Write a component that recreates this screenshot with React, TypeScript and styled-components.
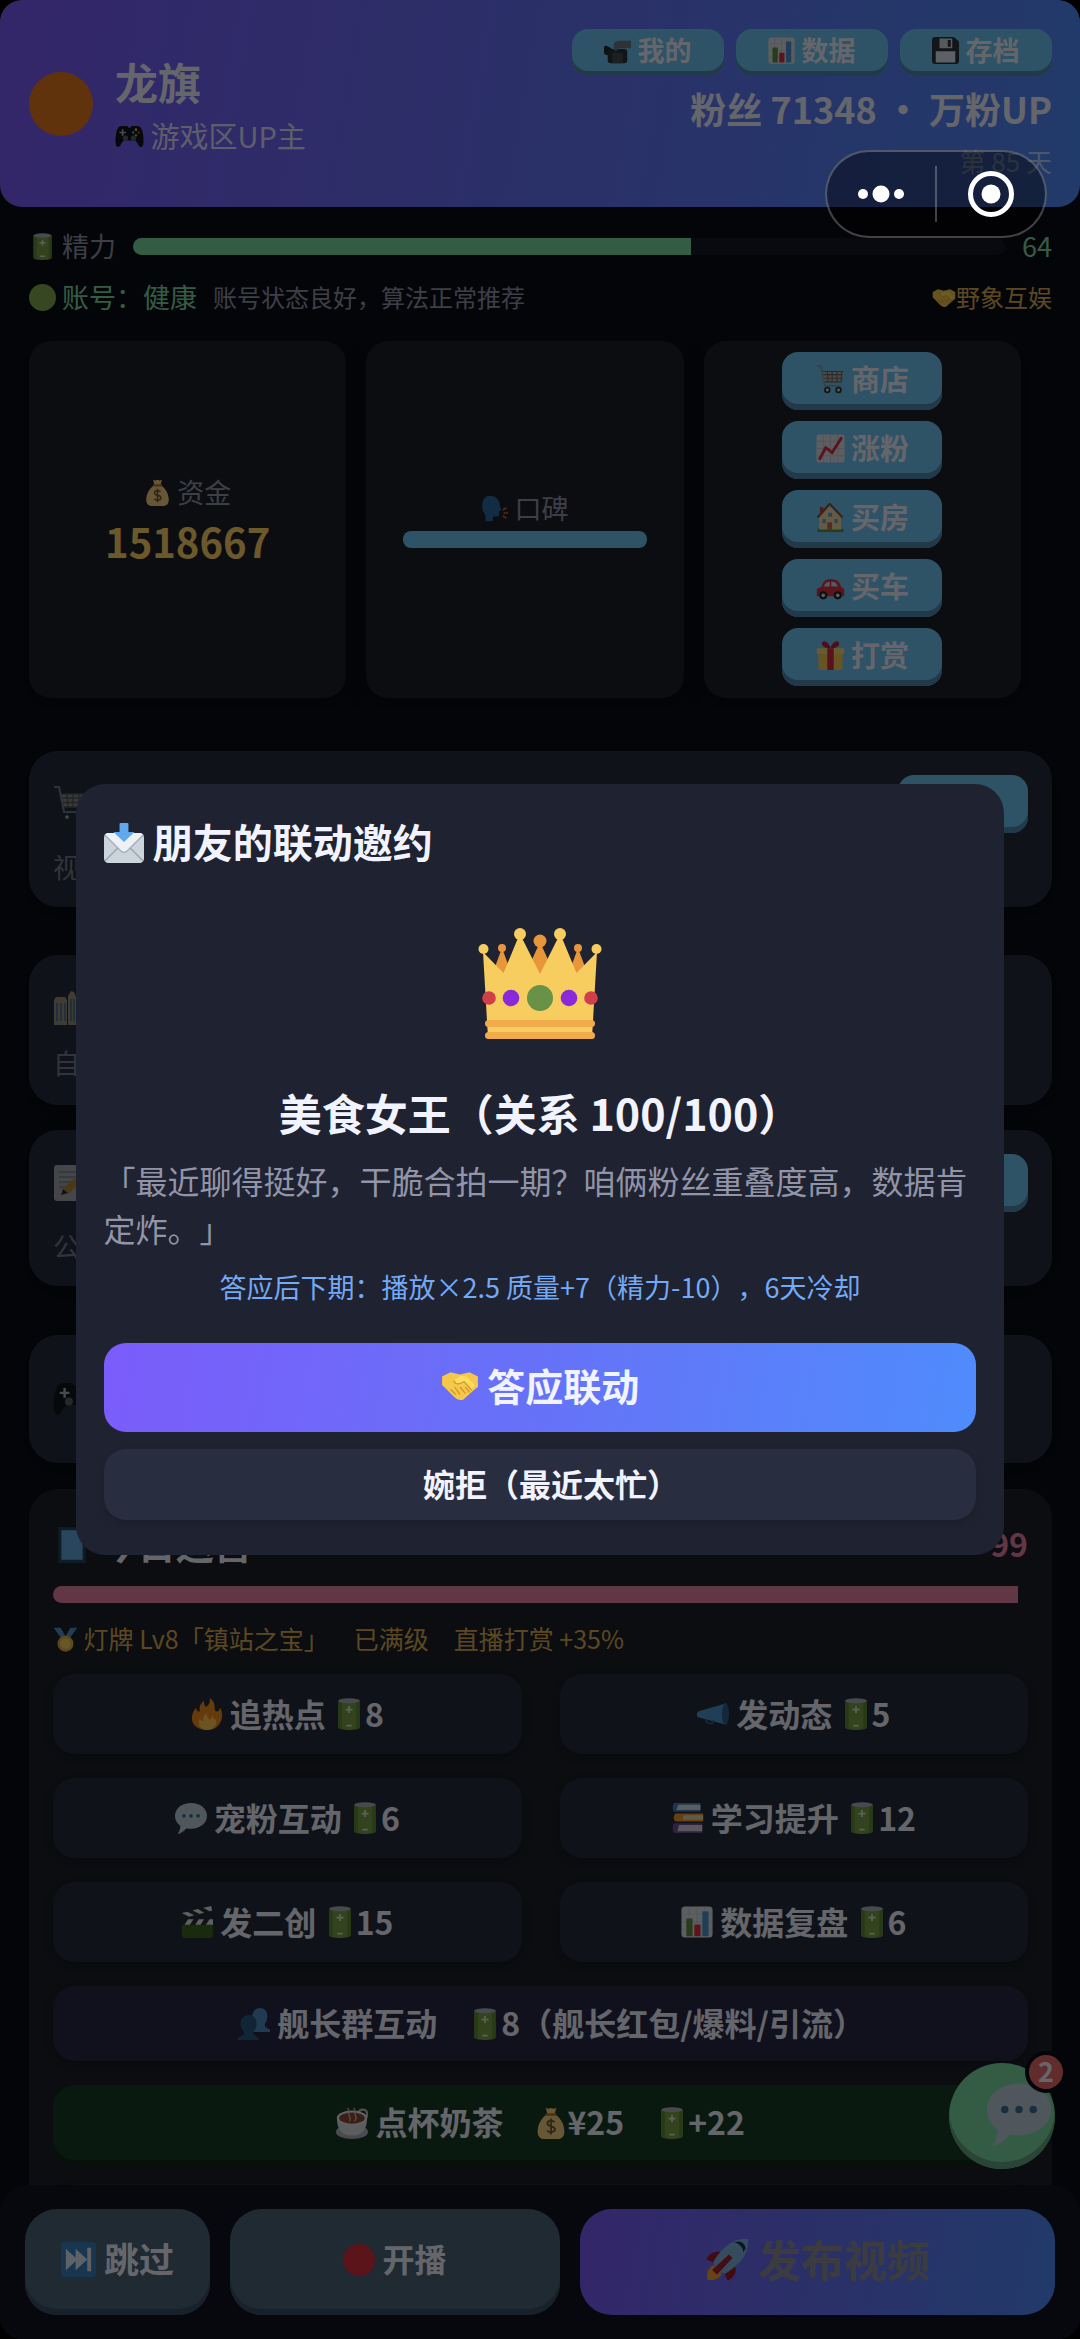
import React from "react";
import styled, { createGlobalStyle, css } from "styled-components";

const c = {
  page: "#0b0d17",
  panel: "#1f2230",
  card: "#1c1f29",
  tile: "#262d3c",
  raised: "#292d40",
  muted: "#9294a8",
  text: "#f1f3ff",
  blue: "#6fc3f3",
  blueEdge: "#4f89ad",
  green: "#7cdba4",
  gold: "#ffd166",
  pink: "#e783a4",
  grad: "linear-gradient(100deg, #7b5cfa, #6672f8 50%, #4f8cfc)",
};

const Global = createGlobalStyle`
  *, *::before, *::after { box-sizing: border-box; }
  body {
    margin: 0;
    background: #000;
    color: ${c.text};
    font-family: "Noto Sans CJK SC", "Noto Sans", sans-serif;
    text-spacing-trim: space-all;
  }
  button { font-family: inherit; border: 0; margin: 0; padding: 0; cursor: pointer; color: ${c.text}; text-spacing-trim: space-all; }
  h1, h2, h3, p { margin: 0; }
`;

/* ---------- icons ---------- */

const art: Record<string, React.ReactNode> = {
  orangeDot: <circle cx="18" cy="18" r="18" fill="#e6791e" />,
  greenDot: <circle cx="18" cy="18" r="18" fill="#83a94f" />,
  redDot: <circle cx="18" cy="18" r="18" fill="#d8303c" />,
  gamepad: (
    <>
      <path d="M9 5h6l2 2h2l2-2h6c5 0 7 4 8 12 .8 6 1 14-3 14-3 0-4-6-7-8H11c-3 2-4 8-7 8-4 0-3.800-8-3-14C2 9 4 5 9 5z" fill="#121518" />
      <path d="M8.500 9h2v3h3v2h-3v3h-2v-3h-3v-2h3z" fill="#aab4bd" />
      <circle cx="26" cy="9.500" r="1.600" fill="#f4c430" />
      <circle cx="29.500" cy="13" r="1.600" fill="#d8303c" />
      <circle cx="22.500" cy="13" r="1.600" fill="#4f8cfc" />
      <circle cx="26" cy="16.500" r="1.600" fill="#7ab648" />
      <circle cx="13" cy="20" r="3.300" fill="#59636c" />
      <circle cx="23" cy="20" r="3.300" fill="#59636c" />
    </>
  ),
  camera: (
    <>
      <path d="M0 14c0-2 2-3 4-2l6 3v11l-6-2c-3 0-4-2-4-4z" fill="#22292f" />
      <rect x="5" y="16" width="26" height="19" rx="4" fill="#2c343b" />
      <rect x="11" y="21" width="14" height="14" fill="#424c55" />
      <path d="M13 11c0-4 3-6 8-6h15v10H20l-2 3h-5z" fill="#6d7780" />
    </>
  ),
  bars: (
    <>
      <rect x="0.500" y="0.500" width="35" height="35" rx="4" fill="#dbe1e8" />
      <path d="M1 9h34M1 18h34M1 27h34M9 1v34M18 1v34M27 1v34" stroke="#c3cbd4" strokeWidth="1" />
      <rect x="6" y="14" width="7" height="20" fill="#5d9040" />
      <rect x="15" y="21" width="7" height="13" fill="#dd2e44" />
      <rect x="24" y="6" width="7" height="28" fill="#4d93d0" />
    </>
  ),
  floppy: (
    <>
      <path d="M4 0h25l7 6v26a4 4 0 0 1-4 4H4a4 4 0 0 1-4-4V4a4 4 0 0 1 4-4z" fill="#2b353e" />
      <path d="M10 2h17v13H10z" fill="#ccd6dd" />
      <path d="M21 4h4v9h-4z" fill="#2b353e" />
      <path d="M5 19h26v15H5z" fill="#e1e8ed" />
    </>
  ),
  battery: (
    <>
      <path d="M6 3h24v30c0 4-24 4-24 0z" fill="#78a145" />
      <path d="M6 3h4v32c-2-.500-4-1-4-2zM26 3h4v30c0 1-2 1.500-4 2z" fill="#628a38" />
      <ellipse cx="18" cy="3.200" rx="12" ry="2.800" fill="#a9b3bb" />
      <path d="M17 9h2v3h3v2h-3v3h-2v-3h-3v-2h3zM15 30h6v2h-6z" fill="#dbe6d0" />
    </>
  ),
  handshake: (
    <>
      <path d="M1 9l8-4 9 2 9-2 8 4v10l-4 3-10 9c-3 1-6 0-9-3l-8-8-3-3z" fill="#f5c74b" />
      <path d="M13 12l6-4 5 1 8 8-3 4-7-6-4 2c-3 1-5-1-5-4z" fill="#ffdc5d" />
      <path d="M12 13c2 4 5 4 10 1l7 8M9 21l5 5M13 19l5 7M18 19l5 6M23 19l4 5" stroke="#cf9a2e" strokeWidth="1.300" fill="none" />
    </>
  ),
  money: (
    <>
      <path d="M12 1l3 1 3-1 3 1 3-1-2 7c8 5 11 13 11 20 0 5-3 8-8 8H11c-5 0-8-3-8-8C3 21 6 13 14 8z" fill="#f3cf83" />
      <path d="M12 7h12v3H12z" fill="#bf7434" />
      <path d="M22 17c-2-2-8-2-8 1.500 0 4 8.500 2.500 8.500 6.500s-7 4-9 1.500M18 13v18" stroke="#6c5a36" strokeWidth="2" fill="none" />
    </>
  ),
  speak: (
    <>
      <path d="M12 1c8 0 13 6 13 13l2 6-3 2v6l-8 1v6H6v-8C-2 18 1 1 12 1z" fill="#2a6aa0" />
      <path d="M29 20l5-3M30 24h6M29 28l5 3" stroke="#dd5b2e" strokeWidth="2" />
    </>
  ),
  cart: (
    <>
      <path d="M1 1h5l5 25h20" fill="none" stroke="#8d99a3" strokeWidth="2.200" />
      <path d="M8 8h26l-2 13H11z" fill="#bdb39a" />
      <path d="M8 8h26M9 12h24M10 16.500h23M11 21h21M14 8l1 13M20 8v13M26 8v13M32 8l-1 13" stroke="#5e6a74" strokeWidth="1.400" />
      <circle cx="14" cy="31" r="4" fill="#2c3338" /><circle cx="28" cy="31" r="4" fill="#2c3338" />
      <circle cx="14" cy="31" r="1.800" fill="#dde3e8" /><circle cx="28" cy="31" r="1.800" fill="#dde3e8" />
    </>
  ),
  trend: (
    <>
      <rect x="0.500" y="0.500" width="35" height="35" rx="4" fill="#dbe1e8" />
      <path d="M1 9h34M1 18h34M1 27h34M9 1v34M18 1v34M27 1v34" stroke="#bcc6cf" strokeWidth="1" />
      <path d="M4 32l8-15 8 6L32 4" fill="none" stroke="#dd2e44" strokeWidth="3.600" />
    </>
  ),
  house: (
    <>
      <path d="M2 32h32v4H2z" fill="#5c913b" />
      <path d="M4 17L17 4l14 13v16H4z" fill="#f0d9a4" />
      <path d="M2 18L17 1l16 17" fill="none" stroke="#7c553c" strokeWidth="2.600" />
      <path d="M5 5h4v7l-4 4z" fill="#b8453b" />
      <path d="M14 24h6v9h-6z" fill="#c1694f" />
      <path d="M8 20h4v5H8zM23 20h4v5h-4zM15 12h5v5h-5z" fill="#55a6d8" />
    </>
  ),
  car: (
    <>
      <path d="M1 30V21l6-3c2-7 5-9 12-9s10 3 12 9l4 3v9z" fill="#dd2e44" />
      <path d="M10 18c1-4 3-6 7-6v6zM19 12c5 0 7 2 8 6h-8z" fill="#bfdcec" />
      <circle cx="9" cy="29" r="5" fill="#232a30" /><circle cx="27" cy="29" r="5" fill="#232a30" />
      <circle cx="9" cy="29" r="2.200" fill="#dde3e8" /><circle cx="27" cy="29" r="2.200" fill="#dde3e8" />
    </>
  ),
  gift: (
    <>
      <path d="M3 14h30v19a3 3 0 0 1-3 3H6a3 3 0 0 1-3-3z" fill="#f3c858" />
      <path d="M1 9h34v7H1z" fill="#fbd973" />
      <path d="M14 9h8v27h-8z" fill="#d32b40" />
      <path d="M18 9C12 9 5 6 8 1c4-3 9 3 10 8 1-5 6-11 10-8 3 5-4 8-10 8z" fill="#b5233a" />
    </>
  ),
  city: (
    <>
      <path d="M1 10l2-3h9l2 3v25H1zM15 6l3-5 3 1 2 5v28h-8zM23 12h12v23H23z" fill="#c6b59a" />
      <path d="M4 13v18M8 13v18M12 13v18M18 9v22M21 9v22M27 16v15M31 16v15" stroke="#5a8fb5" strokeWidth="1.800" />
    </>
  ),
  memo: (
    <>
      <rect x="1" y="0" width="30" height="36" rx="3" fill="#d9dde0" />
      <path d="M6 7h19M6 12h19M6 17h14M6 22h8" stroke="#98a4ad" strokeWidth="1.600" />
      <path d="M31 6l5 5-20 17-7 2 1-7z" fill="#f0ae35" />
      <path d="M10 24l5 4-7 2z" fill="#38332e" />
    </>
  ),
  notebook: (
    <>
      <rect x="5" y="1" width="26" height="34" fill="#1f4655" />
      <rect x="8" y="4" width="20" height="28" fill="#64a7e3" />
    </>
  ),
  medal: (
    <>
      <path d="M1 1h10l8 14h-8zM35 1H25l-8 14h8z" fill="#4f8fcb" />
      <circle cx="18" cy="24" r="11.500" fill="#dfae43" />
      <circle cx="18" cy="24" r="7.500" fill="#f8cf67" />
    </>
  ),
  fire: (
    <>
      <path d="M35 19c0-3-1-6-2-8-1 3-3 5-5 4-3-3 1-10-7-15 1 5-1 8-4 10-2-2-3-4-2-7-5 3-6 8-5 12-2 1-4-1-4-4-4 4-5 9-5 12 0 8 8 13 17 13s17-6 17-17z" fill="#f08c1d" />
      <path d="M28 24c-2 1-3-1-3-4-2 1-3 3-3 5-3-1-4-4-4-8-5 3-4 7-4 9-2 0-3-1-4-3-3 6 0 13 8 13s12-6 10-12z" fill="#ffc94f" />
    </>
  ),
  horn: (
    <>
      <path d="M2 15L33 6v24L2 22c-3-1-3-6 0-7z" fill="#4f93cf" />
      <ellipse cx="32" cy="18" rx="4" ry="12" fill="#2c618f" />
      <path d="M10 24c0 6 9 6 9 1" fill="none" stroke="#2c618f" strokeWidth="2" />
    </>
  ),
  bubble: (
    <>
      <path d="M18 1c10 0 18 6 18 14.500S28 30 18 30c-2 0-4 0-5-.500C10 33 7 35 3 36c2-3 3-6 3-9-4-3-6-7-6-11.500C0 7 8 1 18 1z" fill="#bcd0dd" />
      <circle cx="10" cy="15.500" r="2.100" fill="#3c6e94" /><circle cx="18" cy="15.500" r="2.100" fill="#3c6e94" /><circle cx="26" cy="15.500" r="2.100" fill="#3c6e94" />
    </>
  ),
  books: (
    <>
      <path d="M3 1h29v10H3c-3 0-3-10 0-10z" fill="#3e84bd" /><path d="M7 3h25v6H5z" fill="#d7e0e7" />
      <path d="M5 13h30v9H5c-4 0-4-9 0-9z" fill="#f0992c" /><path d="M13 15h22v5H12z" fill="#e9d6ae" />
      <path d="M3 24h31v11H3c-3 0-3-11 0-11z" fill="#74509c" /><path d="M8 26h26v7H6z" fill="#d8d0de" />
    </>
  ),
  clap: (
    <>
      <path d="M1 21h35v12a3 3 0 0 1-3 3H4a3 3 0 0 1-3-3z" fill="#3f6420" />
      <path d="M1 15h35v6H1zM1 8l33-8 1 6-33 8z" fill="#2a3030" />
      <path d="M4 21l4-6h6l-4 6zM16 21l4-6h6l-4 6zM28 21l4-6h4v6zM1 8l8 4 6-1.500-8-4zM13 5l8 4 5-1.500-7-4zM25 2l7 4 3-1-1-5z" fill="#dfe3e6" />
    </>
  ),
  people: (
    <>
      <path d="M25 0c5 0 8 4 8 9 0 4-1 7-3 9 0 4 3 5 6 6v3H16V14C15 6 18 0 25 0z" fill="#4d8bc2" />
      <path d="M12 8c6 0 9 4 9 10 0 4-2 7-4 9 0 4 3 5 6 6v3H0v-3c3-1 7-2 7-6-2-2-4-5-4-9C3 12 6 8 12 8z" fill="#275b80" />
    </>
  ),
  coffee: (
    <>
      <path d="M25 7c2-6 10-5 10 1s-6 10-9 8" fill="none" stroke="#b9bfc4" strokeWidth="2.500" />
      <ellipse cx="18" cy="28" rx="18" ry="8" fill="#aeb4ba" />
      <path d="M1 12h34c0 11-4 20-17 20S1 23 1 12z" fill="#d9dde1" />
      <ellipse cx="18" cy="12" rx="17" ry="8" fill="#e8ecef" />
      <ellipse cx="18" cy="12.500" rx="14.500" ry="6.300" fill="#8a4b38" />
      <path d="M13 1c3 4 0 5 2 9s0 5 1 6M20 1c3 4 0 5 2 9s-1 5-1 6" fill="none" stroke="#d9b6a9" strokeWidth="1.500" />
    </>
  ),
  next: (
    <>
      <rect width="36" height="36" rx="4" fill="#3b80bd" />
      <path d="M5 7l12 11L5 29zM15 7l12 11-12 11zM27 6h4v24h-4z" fill="#e3e9ee" />
    </>
  ),
  rocket: (
    <>
      <path d="M1 17c3-6 8-7 13-6l-6 9zM19 35c6-3 8-8 6-13l-9 6z" fill="#9d1b2b" />
      <path d="M2 34c-1-6 1-10 5-12l7 7c-2 4-6 6-12 5z" fill="#f6a32f" />
      <path d="M36 0c1 12-5 20-19 29l-4-1-5-5-1-4C15 6 24-1 36 0z" fill="#7cb5df" />
      <path d="M24 3c4 0 8 4 8 8l2-3c0-3-3-6-6-6z" fill="#21313e" />
      <path d="M20 13l3 3-13 14-4-4z" fill="#a61f30" />
    </>
  ),
  invite: (
    <>
      <rect x="0" y="9" width="36" height="27" rx="4" fill="#ccd4dc" />
      <path d="M1 34l13-13M35 34L22 21" stroke="#9aa6b2" strokeWidth="1.300" />
      <path d="M1 11c0-1 1-2 3-2h28c2 0 3 1 3 2L21 25c-2 2-4 2-6 0z" fill="#eef1f5" />
      <path d="M1 11l14 14c2 2 4 2 6 0l14-14" fill="none" stroke="#a6b1bc" strokeWidth="1.300" />
      <path d="M15 0h6a1 1 0 0 1 1 1v7h5.500L18 17 8.500 8H14V1a1 1 0 0 1 1-1z" fill="#5fa9ef" />
    </>
  ),
};

const Glyph = styled.svg<{ $size?: number; $dim?: boolean }>`
  width: ${(p) => (p.$size ? `${p.$size}px` : "1em")};
  height: ${(p) => (p.$size ? `${p.$size}px` : "1em")};
  vertical-align: -0.12em;
  flex: none;
  opacity: ${(p) => (p.$dim ? 0.7 : 1)};
`;

const Icon = ({ name, size, dim }: { name: string; size?: number; dim?: boolean }) => (
  <Glyph viewBox="0 0 36 36" $size={size} $dim={dim} aria-hidden="true">{art[name]}</Glyph>
);

const CrownSvg = styled.svg`
  display: block;
  width: 124px;
  height: 112px;
  margin: 57px auto 42px;
`;

const Crown = () => (
  <CrownSvg viewBox="0 0 124 112" aria-hidden="true">
    <g fill="#e8963a">
      <circle cx="24" cy="20" r="4" /><circle cx="100" cy="20" r="4" /><circle cx="62" cy="13" r="6.500" />
      <path d="M24 20l14 38H10zM100 20l14 38H86zM62 14l20 44H42z" />
    </g>
    <g fill="#f7cd5f">
      <circle cx="5.500" cy="21" r="5" /><circle cx="118.500" cy="21" r="5" />
      <circle cx="42" cy="6" r="6" /><circle cx="82" cy="6" r="6" />
      <path d="M5 24l20.500 21L40 10h4l18 36L80 10h4l14.500 35L119 24l-5 86H10z" />
    </g>
    <g fill="#f2ab4a">
      <rect x="7" y="92" width="110" height="7" rx="3.500" /><rect x="7" y="104" width="110" height="7" rx="3.500" />
    </g>
    <circle cx="11" cy="70" r="6.800" fill="#cf3f49" /><circle cx="113" cy="70" r="6.800" fill="#cf3f49" />
    <circle cx="33" cy="70" r="8.300" fill="#8b29da" /><circle cx="91" cy="70" r="8.300" fill="#8b29da" />
    <circle cx="62" cy="70" r="13" fill="#679248" />
  </CrownSvg>
);

/* ---------- page ---------- */

const Shell = styled.div`
  position: relative;
  display: flex;
  flex-direction: column;
  height: 100vh;
  overflow: hidden;
  border-radius: 22px;
  background: ${c.page};
`;

const Scroll = styled.main`
  flex: 1;
  min-height: 0;
  overflow: hidden;
`;

const Header = styled.header`
  display: flex;
  justify-content: space-between;
  align-items: center;
  padding: 29px 28px 28px 29px;
  border-radius: 22px;
  background: ${c.grad};
`;

const Profile = styled.div`
  display: flex;
  align-items: center;
  gap: 22px;
`;

const Name = styled.h1`
  font-size: 43px;
  line-height: 56px;
`;

const Role = styled.p`
  margin-top: 6px;
  font-size: 29px;
  line-height: 40px;
  color: rgba(255, 255, 255, 0.8);
`;

const HeaderSide = styled.div`
  text-align: right;
`;

const HeaderButtons = styled.div`
  display: flex;
  justify-content: flex-end;
  gap: 12px;
`;

const Fans = styled.p`
  margin-top: 10px;
  font-size: 36px;
  font-weight: 700;
  line-height: 44px;
`;

const Day = styled.p`
  margin-top: 13px;
  font-size: 26px;
  line-height: 36px;
  color: rgba(255, 255, 255, 0.6);
`;

const BlueButton = styled.button<{ $kind: "small" | "shop" | "card" }>`
  border-radius: 16px;
  background: ${c.blue};
  font-weight: 700;
  ${(p) =>
    p.$kind === "small"
      ? css`width: 152px; height: 47px; padding-bottom: 6px; font-size: 27px; line-height: 40px; box-shadow: inset 0 -5px 0 ${c.blueEdge};`
      : css`width: ${p.$kind === "shop" ? 160 : 130}px; height: 58px; padding-bottom: 7px; font-size: 29px; line-height: 44px; box-shadow: inset 0 -6px 0 ${c.blueEdge};`}
`;

const Body = styled.div`
  padding: 21px 28px 0 29px;
`;

const EnergyRow = styled.div`
  display: flex;
  align-items: center;
  gap: 17px;
  font-size: 27px;
  line-height: 36px;
  color: ${c.muted};
`;

const Track = styled.div`
  flex: 1;
  height: 17px;
  border-radius: 9px;
  overflow: hidden;
  background: #161a24;
`;

const Fill = styled.div<{ $tone: string }>`
  height: 100%;
  background: ${(p) => p.$tone};
`;

const Tint = styled.span<{ $tone: string }>`
  color: ${(p) => p.$tone};
`;

const AccountRow = styled.div`
  display: flex;
  align-items: center;
  gap: 16px;
  margin-top: 15px;
  font-size: 27px;
  line-height: 36px;
`;

const Small = styled.span<{ $tone: string; $end?: boolean }>`
  font-size: 24px;
  color: ${(p) => p.$tone};
  margin-left: ${(p) => (p.$end ? "auto" : "0")};
`;

const Stats = styled.section`
  display: grid;
  grid-template-columns: repeat(3, 1fr);
  gap: 20px;
  margin: 26px 31px 0 0;
`;

const Stat = styled.div`
  display: flex;
  flex-direction: column;
  align-items: center;
  justify-content: center;
  gap: 11px;
  padding: 11px 37px 12px;
  border-radius: 22px;
  background: ${c.card};
  box-shadow: 0 6px 20px rgba(0, 0, 0, 0.3);
`;

const StatLabel = styled.p`
  font-size: 27px;
  line-height: 36px;
  color: ${c.muted};
`;

const Money = styled.p`
  margin-top: -3px;
  font-size: 40px;
  font-weight: 700;
  line-height: 46px;
  color: ${c.gold};
`;

const RepTrack = styled.div`
  width: 100%;
  height: 17px;
  margin-top: -6px;
  border-radius: 8px;
  background: ${c.blue};
`;

const Promo = styled.section<{ $gap?: number; $pad: number; $above: number }>`
  margin-top: ${(p) => p.$above}px;
  padding: 24px 24px ${(p) => p.$pad}px;
  border-radius: 29px;
  background: ${c.tile};
  box-shadow: 0 6px 20px rgba(0, 0, 0, 0.3);
  p { margin-top: ${(p) => p.$gap}px; }
`;

const PromoHead = styled.div<{ $tall?: boolean }>`
  display: flex;
  align-items: center;
  justify-content: space-between;
  min-height: ${(p) => (p.$tall ? 80 : 58)}px;
`;

const PromoText = styled.p`
  font-size: 27px;
  line-height: 40px;
  color: #777b8c;
`;

const Ops = styled.section`
  margin-top: 26px;
  padding: 26px 24px;
  border-radius: 29px;
  background: ${c.card};
`;

const OpsHead = styled.div`
  display: flex;
  justify-content: space-between;
  align-items: center;
  line-height: 56px;
`;

const OpsTitle = styled.h2`
  font-size: 38px;
`;

const Heat = styled.strong`
  font-size: 32px;
  color: ${c.pink};
`;

const HeatTrack = styled(Track)`
  margin-top: 15px;
  background: transparent;
`;

const Badge = styled.p`
  margin: 17px 0 18px;
  font-size: 25px;
  line-height: 36px;
  color: #d9ad55;
`;

const Actions = styled.div`
  display: grid;
  grid-template-columns: 1fr 1fr;
  gap: 24px 38px;
`;

/* A closing full-width bracket carries blank space on its right; the left padding balances it. */
const bracketBalance = css`
  padding-left: 22px;
`;

const actionTone = {
  fleet: "#262947",
  tea: "#183d26",
  gold: "#26241f",
};

const Action = styled.button<{ $tone?: keyof typeof actionTone; $bracket?: boolean }>`
  height: ${(p) => (p.$tone ? 75 : 80)}px;
  padding-bottom: 3px;
  grid-column: ${(p) => (p.$tone ? "1 / -1" : "auto")};
  border-radius: 22px;
  font-size: 32px;
  font-weight: 700;
  line-height: 48px;
  background: ${(p) => (p.$tone ? actionTone[p.$tone] : c.tile)};
  box-shadow: ${(p) => (p.$tone === "tea" ? "0 5px 0 #122a1a" : "0 4px 8px rgba(0, 0, 0, 0.2)")};
  ${(p) => p.$bracket && bracketBalance}
`;

/* ---------- bottom bar ---------- */

const Nav = styled.nav`
  display: flex;
  gap: 20px;
  padding: 24px 25px;
  border-radius: 29px 29px 0 0;
  background: #11141f;
`;

const NavButton = styled.button<{ $grow: number; $size: number; $main?: boolean }>`
  flex: ${(p) => p.$grow} 1 0;
  height: 106px;
  padding-bottom: 8px;
  border-radius: 32px;
  font-size: ${(p) => p.$size}px;
  font-weight: 700;
  line-height: 60px;
  white-space: nowrap;
  ${(p) =>
    p.$main
      ? css`background: ${c.grad}; color: #8c8e9a;`
      : css`background: #4a647a; box-shadow: inset 0 -6px 0 #3b4e64;`}
`;

const Chat = styled.button`
  position: absolute;
  right: 25px;
  bottom: 170px;
  width: 106px;
  height: 106px;
  padding: 0 0 2px 34px;
  border-radius: 50%;
  background: ${c.green};
  box-shadow: inset 0 -7px 0 #64a583;
`;

const Unread = styled.span`
  position: absolute;
  top: -12px;
  right: -12px;
  width: 42px;
  height: 42px;
  border: 4px solid ${c.page};
  border-radius: 50%;
  background: #e86a68;
  font-size: 27px;
  font-weight: 700;
  line-height: 32px;
  text-align: center;
`;

/* ---------- dialog ---------- */

const Veil = styled.div`
  position: absolute;
  inset: 0;
  display: flex;
  align-items: center;
  justify-content: center;
  background: rgba(0, 0, 0, 0.58);
`;

const Dialog = styled.section`
  width: 86%;
  padding: 27px 28px 35px;
  border-radius: 29px;
  background: ${c.panel};
`;

const DialogTitle = styled.h2`
  font-size: 40px;
  line-height: 60px;
`;

const Friend = styled.h3`
  font-size: 43px;
  line-height: 60px;
  text-align: center;
`;

const Quote = styled.p`
  margin-top: 14px;
  font-size: 32px;
  line-height: 48px;
  color: ${c.muted};
`;

const Hint = styled.p`
  margin: 15px 0 36px;
  font-size: 27px;
  line-height: 40px;
  text-align: center;
  color: #74a9f5;
`;

const Accept = styled.button`
  display: block;
  width: 100%;
  height: 89px;
  padding-bottom: 6px;
  border-radius: 22px;
  background: ${c.grad};
  font-size: 38px;
  font-weight: 700;
  line-height: 56px;
`;

const Decline = styled.button`
  display: block;
  width: 100%;
  height: 71px;
  margin-top: 17px;
  padding-bottom: 3px;
  border-radius: 22px;
  background: ${c.raised};
  box-shadow: 0 3px 6px rgba(0, 0, 0, 0.15);
  font-size: 32px;
  font-weight: 700;
  line-height: 48px;
  ${bracketBalance}
`;

/* ---------- mini-program capsule ---------- */

const Capsule = styled.div`
  position: absolute;
  top: 150px;
  right: 33px;
  display: flex;
  align-items: center;
  width: 222px;
  height: 88px;
  border: 2px solid rgba(255, 255, 255, 0.25);
  border-radius: 44px;
  background: rgba(0, 0, 0, 0.42);
`;

const CapsuleButton = styled.button`
  flex: 1;
  height: 56px;
  background: none;
  & + & { border-left: 2px solid rgba(255, 255, 255, 0.25); }
  svg { display: block; margin: 0 auto; }
`;

const headerButtons = [["camera", "我的"], ["bars", "数据"], ["floppy", "存档"]];
const shopButtons = [["cart", "商店"], ["trend", "涨粉"], ["house", "买房"], ["car", "买车"], ["gift", "打赏"]];
const actions: [string, string, number][] = [
  ["fire", "追热点", 8],
  ["horn", "发动态", 5],
  ["bubble", "宠粉互动", 6],
  ["books", "学习提升", 12],
  ["clap", "发二创", 15],
  ["bars", "数据复盘", 6],
];
const energy = 64;
const heat = 99;

export default function App() {
  return (
    <Shell lang="zh-CN">
      <Global />
      <Scroll>
        <Header>
          <Profile>
            <Icon name="orangeDot" size={64} />
            <div>
              <Name>龙旗</Name>
              <Role><Icon name="gamepad" /> 游戏区UP主</Role>
            </div>
          </Profile>
          <HeaderSide>
            <HeaderButtons>
              {headerButtons.map(([icon, label]) => (
                <BlueButton key={label} $kind="small"><Icon name={icon} /> {label}</BlueButton>
              ))}
            </HeaderButtons>
            <Fans>粉丝 71348 · 万粉UP</Fans>
            <Day>第 85 天</Day>
          </HeaderSide>
        </Header>

        <Body>
          <EnergyRow>
            <span><Icon name="battery" /> 精力</span>
            <Track><Fill $tone={c.green} style={{ width: `${energy}%` }} /></Track>
            <Tint $tone={c.green}>{energy}</Tint>
          </EnergyRow>
          <AccountRow>
            <Tint $tone={c.green}><Icon name="greenDot" /> 账号：健康</Tint>
            <Small $tone={c.muted}>账号状态良好，算法正常推荐</Small>
            <Small $tone="#d9ad55" $end><Icon name="handshake" />野象互娱</Small>
          </AccountRow>

          <Stats>
            <Stat>
              <StatLabel><Icon name="money" /> 资金</StatLabel>
              <Money>1518667</Money>
            </Stat>
            <Stat>
              <StatLabel><Icon name="speak" /> 口碑</StatLabel>
              <RepTrack />
            </Stat>
            <Stat>
              {shopButtons.map(([icon, label]) => (
                <BlueButton key={label} $kind="shop"><Icon name={icon} /> {label}</BlueButton>
              ))}
            </Stat>
          </Stats>

          <Promo $above={53} $gap={14} $pad={20}>
            <PromoHead>
              <Icon name="cart" size={36} dim />
              <BlueButton $kind="card" aria-label="商店" />
            </PromoHead>
            <PromoText>视</PromoText>
          </Promo>
          <Promo $above={48} $gap={6} $pad={22}>
            <PromoHead><Icon name="city" size={36} dim /></PromoHead>
            <PromoText>自</PromoText>
          </Promo>
          <Promo $above={25} $gap={14} $pad={20}>
            <PromoHead>
              <Icon name="memo" size={36} dim />
              <BlueButton $kind="card" aria-label="公告" />
            </PromoHead>
            <PromoText>公</PromoText>
          </Promo>
          <Promo $above={49} $pad={24}>
            <PromoHead $tall><Icon name="gamepad" size={44} /></PromoHead>
          </Promo>

          <Ops>
            <OpsHead>
              <OpsTitle><Icon name="notebook" /> 今日运营</OpsTitle>
              <Heat>{heat}</Heat>
            </OpsHead>
            <HeatTrack><Fill $tone={c.pink} style={{ width: `${heat}%` }} /></HeatTrack>
            <Badge><Icon name="medal" /> 灯牌 Lv8「镇站之宝」　已满级　直播打赏 +35%</Badge>
            <Actions>
              {actions.map(([icon, label, cost]) => (
                <Action key={label}><Icon name={icon} /> {label} <Icon name="battery" />{cost}</Action>
              ))}
              <Action $tone="fleet" $bracket><Icon name="people" /> 舰长群互动　<Icon name="battery" />8（舰长红包/爆料/引流）</Action>
              <Action $tone="tea"><Icon name="coffee" /> 点杯奶茶　<Icon name="money" />¥25　<Icon name="battery" />+22</Action>
              <Action $tone="gold" aria-label="更多" />
            </Actions>
          </Ops>
        </Body>
      </Scroll>

      <Nav>
        <NavButton $grow={185} $size={35}><Icon name="next" /> 跳过</NavButton>
        <NavButton $grow={329} $size={32}><Icon name="redDot" /> 开播</NavButton>
        <NavButton $grow={475} $size={43} $main><Icon name="rocket" /> 发布视频</NavButton>
      </Nav>

      <Chat aria-label="消息">
        <Icon name="bubble" size={64} />
        <Unread>2</Unread>
      </Chat>

      <Veil>
        <Dialog role="dialog" aria-modal="true" aria-labelledby="invite-title">
          <DialogTitle id="invite-title"><Icon name="invite" /> 朋友的联动邀约</DialogTitle>
          <Crown />
          <Friend>美食女王（关系 100/100）</Friend>
          <Quote>「最近聊得挺好，干脆合拍一期？咱俩粉丝重叠度高，数据肯定炸。」</Quote>
          <Hint>答应后下期：播放×2.5 质量+7（精力-10），6天冷却</Hint>
          <Accept><Icon name="handshake" /> 答应联动</Accept>
          <Decline>婉拒（最近太忙）</Decline>
        </Dialog>
      </Veil>

      <Capsule>
        <CapsuleButton aria-label="更多">
          <svg width="50" height="20" viewBox="0 0 50 20" fill="#fff" aria-hidden="true">
            <circle cx="7" cy="10" r="5" /><circle cx="25" cy="10" r="8.500" /><circle cx="43" cy="10" r="5" />
          </svg>
        </CapsuleButton>
        <CapsuleButton aria-label="关闭">
          <svg width="46" height="46" viewBox="0 0 46 46" aria-hidden="true">
            <circle cx="23" cy="23" r="20.500" fill="none" stroke="#fff" strokeWidth="5" /><circle cx="23" cy="23" r="9.500" fill="#fff" />
          </svg>
        </CapsuleButton>
      </Capsule>
    </Shell>
  );
}
